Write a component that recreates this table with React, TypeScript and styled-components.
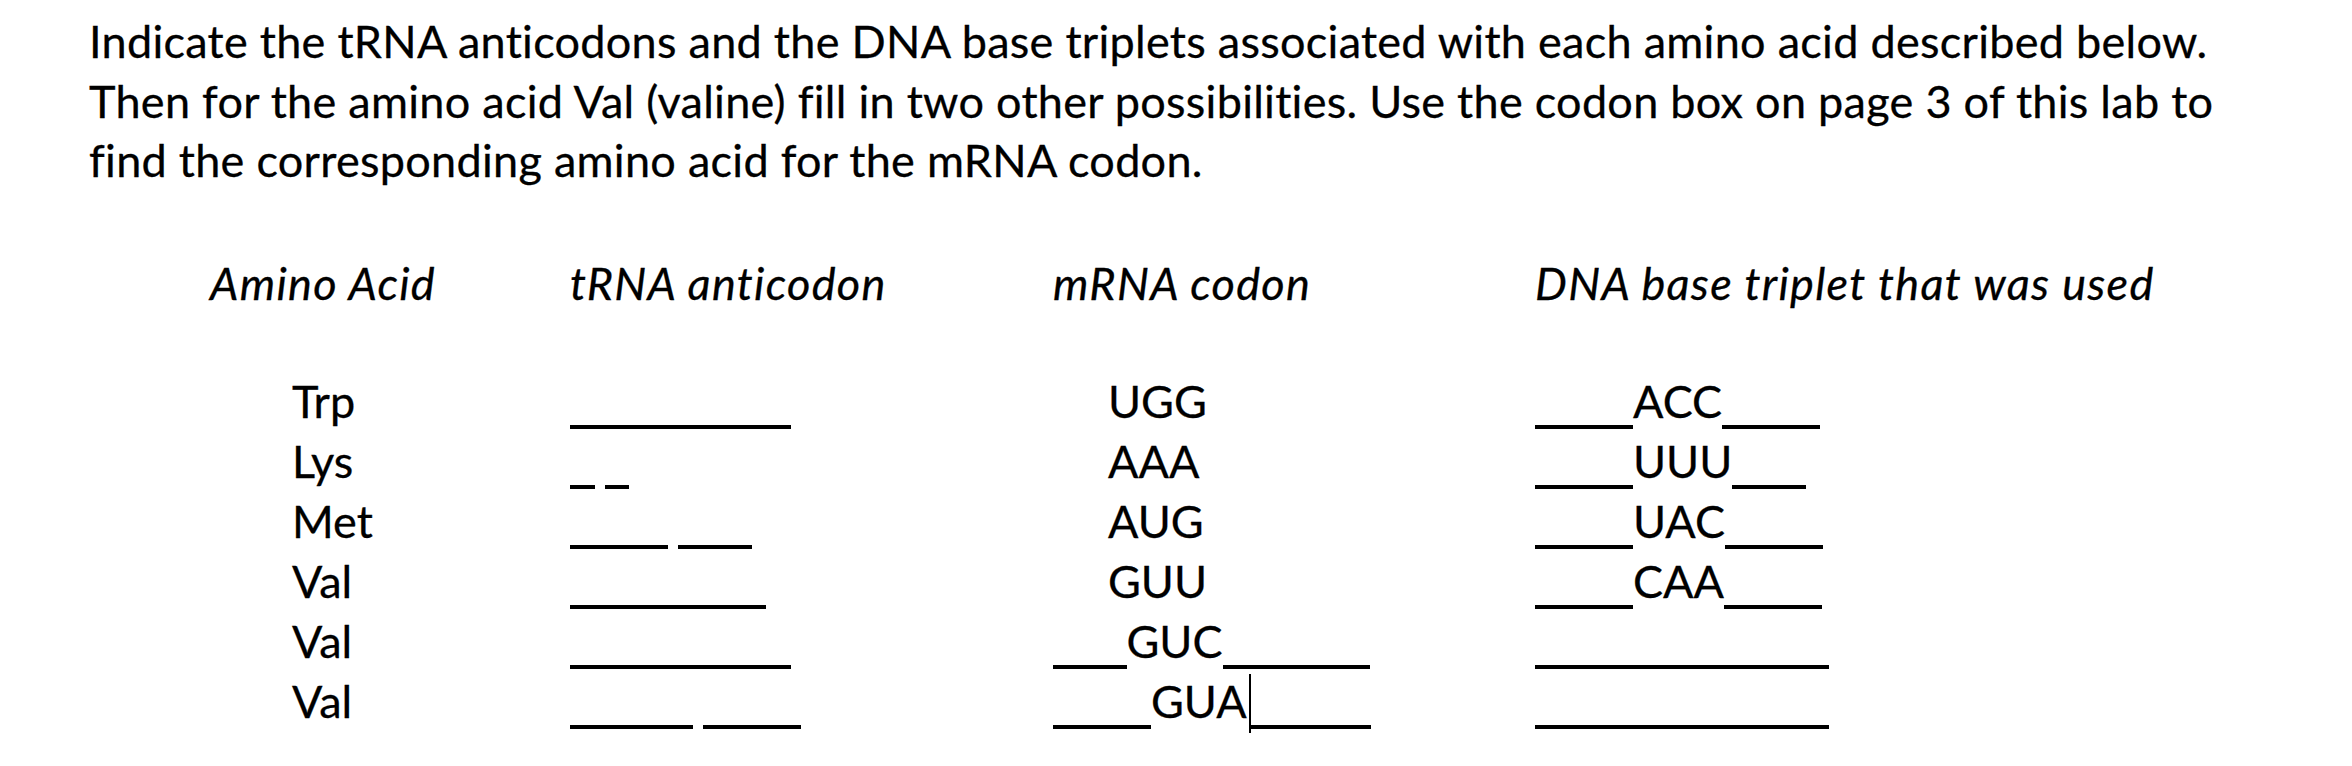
import React from 'react'
import styled, { createGlobalStyle } from 'styled-components'

const GlobalStyle = createGlobalStyle`
  html, body {
    margin: 0;
    padding: 0;
    background: #ffffff;
  }
  body {
    font-family: Lato, 'Liberation Sans', sans-serif;
    color: #000000;
    font-variant-ligatures: none;
    -webkit-text-stroke: 0.3px #000;
  }
`

const Page = styled.div`
  width: 2352px;
  height: 766px;
  box-sizing: border-box;
  padding: 12px 0 0 89px;
  font-size: 45px;
  line-height: 59.5px;
  overflow: hidden;
`

const Intro = styled.p`
  margin: 0;
  white-space: nowrap;
  letter-spacing: 0.28px;
`

const Table = styled.div`
  margin: 62px 0 0 121px;
`

const Row = styled.div<{ $head?: boolean }>`
  display: grid;
  grid-template-columns: 360px 483px 482px 1fr;
  height: 60px;
  line-height: 60px;
  white-space: nowrap;
  font-style: ${({ $head }) => ($head ? 'italic' : 'normal')};
  letter-spacing: ${({ $head }) => ($head ? '1.3px' : '0')};
  margin-bottom: ${({ $head }) => ($head ? '58px' : '0')};
`

const Cell = styled.div<{ $indent?: number }>`
  padding-left: ${({ $indent }) => $indent || 0}px;
`

const Blank = styled.span<{ $n: number }>`
  display: inline-block;
  width: ${({ $n }) => $n * 24.5}px;
  height: 0;
  border-bottom: 4px solid #000;
  vertical-align: -11px;
`

const Gap = styled.span`
  display: inline-block;
  width: 10px;
`

const Cursor = styled.span`
  display: inline-block;
  width: 0;
  height: 59px;
  border-left: 2px solid #000;
  margin-left: 2px;
  margin-right: -2px;
  vertical-align: -15px;
`

type Seg = number | string

const Fill = ({ segs }: { segs: Seg[] }) => (
  <>
    {segs.map((s, i) => {
      if (typeof s === 'number') return <Blank key={i} $n={s} />
      if (s === ' ') return <Gap key={i} />
      if (s === '|') return <Cursor key={i} />
      return <span key={i}>{s}</span>
    })}
  </>
)

const rows: { acid: string; trna: Seg[]; mrna: Seg[]; mrnaIndent: number; dna: Seg[] }[] = [
  { acid: 'Trp', trna: [9], mrna: ['UGG'], mrnaIndent: 55, dna: [4, 'ACC', 4] },
  { acid: 'Lys', trna: [1, ' ', 1], mrna: ['AAA'], mrnaIndent: 55, dna: [4, 'UUU', 3] },
  { acid: 'Met', trna: [4, ' ', 3], mrna: ['AUG'], mrnaIndent: 55, dna: [4, 'UAC', 4] },
  { acid: 'Val', trna: [8], mrna: ['GUU'], mrnaIndent: 55, dna: [4, 'CAA', 4] },
  { acid: 'Val', trna: [9], mrna: [3, 'GUC', 6], mrnaIndent: 0, dna: [12] },
  { acid: 'Val', trna: [5, ' ', 4], mrna: [4, 'GUA', '|', 5], mrnaIndent: 0, dna: [12] },
]

export default function App() {
  return (
    <>
      <GlobalStyle />
      <Page>
        <Intro>
          Indicate the tRNA anticodons and the DNA base triplets associated with each amino acid described below.
          <br />
          Then for the amino acid Val (valine) fill in two other possibilities. Use the codon box on page 3 of this lab to
          <br />
          find the corresponding amino acid for the mRNA codon.
        </Intro>
        <Table>
          <Row $head>
            <Cell>Amino Acid</Cell>
            <Cell>tRNA anticodon</Cell>
            <Cell>mRNA codon</Cell>
            <Cell>DNA base triplet that was used</Cell>
          </Row>
          {rows.map((r, i) => (
            <Row key={i}>
              <Cell $indent={82}>{r.acid}</Cell>
              <Cell>
                <Fill segs={r.trna} />
              </Cell>
              <Cell $indent={r.mrnaIndent}>
                <Fill segs={r.mrna} />
              </Cell>
              <Cell>
                <Fill segs={r.dna} />
              </Cell>
            </Row>
          ))}
        </Table>
      </Page>
    </>
  )
}
